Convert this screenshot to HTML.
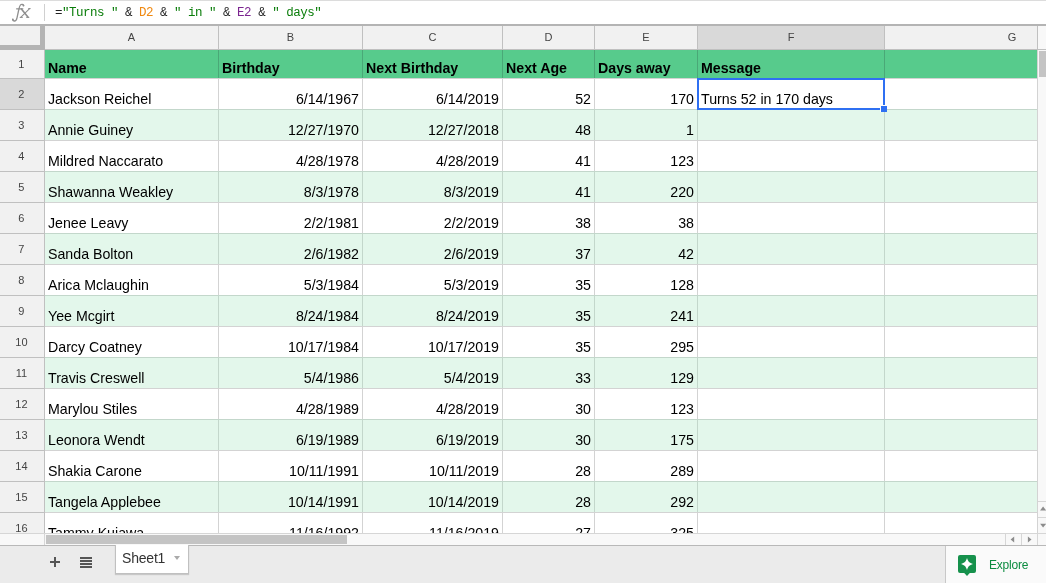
<!DOCTYPE html>
<html><head><meta charset="utf-8">
<style>
*{margin:0;padding:0;box-sizing:border-box}
html,body{width:1046px;height:583px;overflow:hidden;background:#fff;position:relative;font-family:"Liberation Sans",sans-serif}
.a{position:absolute}
.t{position:absolute;white-space:nowrap;font-size:14.2px;line-height:16px;color:#000}
.r{text-align:right}
.b{font-weight:bold}
.ch{position:absolute;top:26px;height:23px;line-height:23px;font-size:11px;color:#444;text-align:center}
.rh{position:absolute;left:-0.6px;width:44px;font-size:11px;color:#444;text-align:center}
.fm{position:absolute;left:55px;top:4px;font-family:"Liberation Mono",monospace;font-size:12.5px;letter-spacing:-0.5px;line-height:18px;white-space:pre;color:#222}
#w{position:absolute;left:0;top:0;width:1046px;height:583px;will-change:transform}
</style></head><body><div id="w">

<div class="a" style="left:0;top:0;width:1046px;height:1px;background:#dcdcdc"></div>
<div class="a" style="left:0;top:24px;width:1046px;height:2px;background:#b4b4b4"></div>
<svg class="a" style="left:0;top:0" width="40" height="25" viewBox="0 0 40 25" fill="none" stroke="#8f8f8f" stroke-width="1.3" stroke-linecap="round">
<path d="M23.7 5.6C23.3 4.3 21.6 3.8 20.5 4.9 19.6 5.8 19.2 7.6 18.7 10L17 17.8C16.5 20.2 15.5 21.1 14.2 21 13.2 20.9 12.6 20.3 12.6 19.5"/>
<path d="M16.6 8.8H22.8"/>
<path d="M21.4 8.9L28.1 17.2" stroke-width="1.6"/><path d="M29.6 8.6L20.7 17.3" stroke-width="1.1"/><path d="M20.1 17.4H22.4M26.6 17.4H28.9M28.6 8.6H30.2" stroke-width="1"/>
<circle cx="23.4" cy="5.5" r="0.9" fill="#8f8f8f" stroke="none"/>
<circle cx="12.9" cy="19.4" r="0.9" fill="#8f8f8f" stroke="none"/>
</svg>
<div class="a" style="left:44px;top:4px;width:1px;height:17px;background:#d0d0d0"></div>
<div class="fm">=<span style="color:#0a7d0a">"Turns "</span> &amp; <span style="color:#f0880f">D2</span> &amp; <span style="color:#0a7d0a">" in "</span> &amp; <span style="color:#7b2590">E2</span> &amp; <span style="color:#0a7d0a">" days"</span></div>
<div class="a" style="left:0;top:26px;width:1037px;height:23px;background:#f1f1f1"></div>
<div class="a" style="left:698px;top:26px;width:186px;height:23px;background:#d9d9d9"></div>
<div class="a" style="left:0;top:49px;width:1038px;height:1px;background:#c0c0c0"></div>
<div class="a" style="left:218px;top:26px;width:1px;height:23px;background:#c0c0c0"></div>
<div class="ch" style="left:45px;width:173px">A</div>
<div class="a" style="left:362px;top:26px;width:1px;height:23px;background:#c0c0c0"></div>
<div class="ch" style="left:219px;width:143px">B</div>
<div class="a" style="left:502px;top:26px;width:1px;height:23px;background:#c0c0c0"></div>
<div class="ch" style="left:363px;width:139px">C</div>
<div class="a" style="left:594px;top:26px;width:1px;height:23px;background:#c0c0c0"></div>
<div class="ch" style="left:503px;width:91px">D</div>
<div class="a" style="left:697px;top:26px;width:1px;height:23px;background:#c0c0c0"></div>
<div class="ch" style="left:595px;width:102px">E</div>
<div class="a" style="left:884px;top:26px;width:1px;height:23px;background:#c0c0c0"></div>
<div class="ch" style="left:698px;width:186px">F</div>
<div class="a" style="left:1037px;top:26px;width:1px;height:23px;background:#c0c0c0"></div>
<div class="ch" style="left:982px;width:60px">G</div>
<div class="a" style="left:40px;top:26px;width:5px;height:24px;background:#b4b4b4"></div>
<div class="a" style="left:0;top:45px;width:45px;height:5px;background:#b4b4b4"></div>
<div class="a" style="left:0;top:50px;width:44px;height:483px;background:#f1f1f1"></div>
<div class="a" style="left:0;top:79px;width:44px;height:30px;background:#d9d9d9"></div>
<div class="a" style="left:44px;top:50px;width:1px;height:495px;background:#c0c0c0"></div>
<div class="a" style="left:45px;top:50px;width:992px;height:28px;background:#57cb8c"></div>
<div class="a" style="left:0;top:78px;width:44px;height:1px;background:#c0c0c0"></div>
<div class="a" style="left:45px;top:78px;width:992px;height:1px;background:#d3d3d3"></div>
<div class="rh" style="top:50px;height:28px;line-height:28px;overflow:hidden">1</div>
<div class="a" style="left:218px;top:50px;width:1px;height:28px;background:#4aa877"></div>
<div class="a" style="left:362px;top:50px;width:1px;height:28px;background:#4aa877"></div>
<div class="a" style="left:502px;top:50px;width:1px;height:28px;background:#4aa877"></div>
<div class="a" style="left:594px;top:50px;width:1px;height:28px;background:#4aa877"></div>
<div class="a" style="left:697px;top:50px;width:1px;height:28px;background:#4aa877"></div>
<div class="a" style="left:884px;top:50px;width:1px;height:28px;background:#4aa877"></div>
<div class="a" style="left:1037px;top:50px;width:1px;height:28px;background:#4aa877"></div>
<div class="a" style="left:45px;top:79px;width:992px;height:30px;background:#ffffff"></div>
<div class="a" style="left:0;top:109px;width:44px;height:1px;background:#c0c0c0"></div>
<div class="a" style="left:45px;top:109px;width:992px;height:1px;background:#c3d7cb"></div>
<div class="rh" style="top:79px;height:30px;line-height:30px;overflow:hidden">2</div>
<div class="a" style="left:218px;top:79px;width:1px;height:30px;background:#d3d3d3"></div>
<div class="a" style="left:362px;top:79px;width:1px;height:30px;background:#d3d3d3"></div>
<div class="a" style="left:502px;top:79px;width:1px;height:30px;background:#d3d3d3"></div>
<div class="a" style="left:594px;top:79px;width:1px;height:30px;background:#d3d3d3"></div>
<div class="a" style="left:697px;top:79px;width:1px;height:30px;background:#d3d3d3"></div>
<div class="a" style="left:884px;top:79px;width:1px;height:30px;background:#d3d3d3"></div>
<div class="a" style="left:1037px;top:79px;width:1px;height:30px;background:#d3d3d3"></div>
<div class="a" style="left:45px;top:110px;width:992px;height:30px;background:#e3f7eb"></div>
<div class="a" style="left:0;top:140px;width:44px;height:1px;background:#c0c0c0"></div>
<div class="a" style="left:45px;top:140px;width:992px;height:1px;background:#d3d3d3"></div>
<div class="rh" style="top:110px;height:30px;line-height:30px;overflow:hidden">3</div>
<div class="a" style="left:218px;top:110px;width:1px;height:30px;background:#c3d7cb"></div>
<div class="a" style="left:362px;top:110px;width:1px;height:30px;background:#c3d7cb"></div>
<div class="a" style="left:502px;top:110px;width:1px;height:30px;background:#c3d7cb"></div>
<div class="a" style="left:594px;top:110px;width:1px;height:30px;background:#c3d7cb"></div>
<div class="a" style="left:697px;top:110px;width:1px;height:30px;background:#c3d7cb"></div>
<div class="a" style="left:884px;top:110px;width:1px;height:30px;background:#c3d7cb"></div>
<div class="a" style="left:1037px;top:110px;width:1px;height:30px;background:#c3d7cb"></div>
<div class="a" style="left:45px;top:141px;width:992px;height:30px;background:#ffffff"></div>
<div class="a" style="left:0;top:171px;width:44px;height:1px;background:#c0c0c0"></div>
<div class="a" style="left:45px;top:171px;width:992px;height:1px;background:#c3d7cb"></div>
<div class="rh" style="top:141px;height:30px;line-height:30px;overflow:hidden">4</div>
<div class="a" style="left:218px;top:141px;width:1px;height:30px;background:#d3d3d3"></div>
<div class="a" style="left:362px;top:141px;width:1px;height:30px;background:#d3d3d3"></div>
<div class="a" style="left:502px;top:141px;width:1px;height:30px;background:#d3d3d3"></div>
<div class="a" style="left:594px;top:141px;width:1px;height:30px;background:#d3d3d3"></div>
<div class="a" style="left:697px;top:141px;width:1px;height:30px;background:#d3d3d3"></div>
<div class="a" style="left:884px;top:141px;width:1px;height:30px;background:#d3d3d3"></div>
<div class="a" style="left:1037px;top:141px;width:1px;height:30px;background:#d3d3d3"></div>
<div class="a" style="left:45px;top:172px;width:992px;height:30px;background:#e3f7eb"></div>
<div class="a" style="left:0;top:202px;width:44px;height:1px;background:#c0c0c0"></div>
<div class="a" style="left:45px;top:202px;width:992px;height:1px;background:#d3d3d3"></div>
<div class="rh" style="top:172px;height:30px;line-height:30px;overflow:hidden">5</div>
<div class="a" style="left:218px;top:172px;width:1px;height:30px;background:#c3d7cb"></div>
<div class="a" style="left:362px;top:172px;width:1px;height:30px;background:#c3d7cb"></div>
<div class="a" style="left:502px;top:172px;width:1px;height:30px;background:#c3d7cb"></div>
<div class="a" style="left:594px;top:172px;width:1px;height:30px;background:#c3d7cb"></div>
<div class="a" style="left:697px;top:172px;width:1px;height:30px;background:#c3d7cb"></div>
<div class="a" style="left:884px;top:172px;width:1px;height:30px;background:#c3d7cb"></div>
<div class="a" style="left:1037px;top:172px;width:1px;height:30px;background:#c3d7cb"></div>
<div class="a" style="left:45px;top:203px;width:992px;height:30px;background:#ffffff"></div>
<div class="a" style="left:0;top:233px;width:44px;height:1px;background:#c0c0c0"></div>
<div class="a" style="left:45px;top:233px;width:992px;height:1px;background:#c3d7cb"></div>
<div class="rh" style="top:203px;height:30px;line-height:30px;overflow:hidden">6</div>
<div class="a" style="left:218px;top:203px;width:1px;height:30px;background:#d3d3d3"></div>
<div class="a" style="left:362px;top:203px;width:1px;height:30px;background:#d3d3d3"></div>
<div class="a" style="left:502px;top:203px;width:1px;height:30px;background:#d3d3d3"></div>
<div class="a" style="left:594px;top:203px;width:1px;height:30px;background:#d3d3d3"></div>
<div class="a" style="left:697px;top:203px;width:1px;height:30px;background:#d3d3d3"></div>
<div class="a" style="left:884px;top:203px;width:1px;height:30px;background:#d3d3d3"></div>
<div class="a" style="left:1037px;top:203px;width:1px;height:30px;background:#d3d3d3"></div>
<div class="a" style="left:45px;top:234px;width:992px;height:30px;background:#e3f7eb"></div>
<div class="a" style="left:0;top:264px;width:44px;height:1px;background:#c0c0c0"></div>
<div class="a" style="left:45px;top:264px;width:992px;height:1px;background:#d3d3d3"></div>
<div class="rh" style="top:234px;height:30px;line-height:30px;overflow:hidden">7</div>
<div class="a" style="left:218px;top:234px;width:1px;height:30px;background:#c3d7cb"></div>
<div class="a" style="left:362px;top:234px;width:1px;height:30px;background:#c3d7cb"></div>
<div class="a" style="left:502px;top:234px;width:1px;height:30px;background:#c3d7cb"></div>
<div class="a" style="left:594px;top:234px;width:1px;height:30px;background:#c3d7cb"></div>
<div class="a" style="left:697px;top:234px;width:1px;height:30px;background:#c3d7cb"></div>
<div class="a" style="left:884px;top:234px;width:1px;height:30px;background:#c3d7cb"></div>
<div class="a" style="left:1037px;top:234px;width:1px;height:30px;background:#c3d7cb"></div>
<div class="a" style="left:45px;top:265px;width:992px;height:30px;background:#ffffff"></div>
<div class="a" style="left:0;top:295px;width:44px;height:1px;background:#c0c0c0"></div>
<div class="a" style="left:45px;top:295px;width:992px;height:1px;background:#c3d7cb"></div>
<div class="rh" style="top:265px;height:30px;line-height:30px;overflow:hidden">8</div>
<div class="a" style="left:218px;top:265px;width:1px;height:30px;background:#d3d3d3"></div>
<div class="a" style="left:362px;top:265px;width:1px;height:30px;background:#d3d3d3"></div>
<div class="a" style="left:502px;top:265px;width:1px;height:30px;background:#d3d3d3"></div>
<div class="a" style="left:594px;top:265px;width:1px;height:30px;background:#d3d3d3"></div>
<div class="a" style="left:697px;top:265px;width:1px;height:30px;background:#d3d3d3"></div>
<div class="a" style="left:884px;top:265px;width:1px;height:30px;background:#d3d3d3"></div>
<div class="a" style="left:1037px;top:265px;width:1px;height:30px;background:#d3d3d3"></div>
<div class="a" style="left:45px;top:296px;width:992px;height:30px;background:#e3f7eb"></div>
<div class="a" style="left:0;top:326px;width:44px;height:1px;background:#c0c0c0"></div>
<div class="a" style="left:45px;top:326px;width:992px;height:1px;background:#d3d3d3"></div>
<div class="rh" style="top:296px;height:30px;line-height:30px;overflow:hidden">9</div>
<div class="a" style="left:218px;top:296px;width:1px;height:30px;background:#c3d7cb"></div>
<div class="a" style="left:362px;top:296px;width:1px;height:30px;background:#c3d7cb"></div>
<div class="a" style="left:502px;top:296px;width:1px;height:30px;background:#c3d7cb"></div>
<div class="a" style="left:594px;top:296px;width:1px;height:30px;background:#c3d7cb"></div>
<div class="a" style="left:697px;top:296px;width:1px;height:30px;background:#c3d7cb"></div>
<div class="a" style="left:884px;top:296px;width:1px;height:30px;background:#c3d7cb"></div>
<div class="a" style="left:1037px;top:296px;width:1px;height:30px;background:#c3d7cb"></div>
<div class="a" style="left:45px;top:327px;width:992px;height:30px;background:#ffffff"></div>
<div class="a" style="left:0;top:357px;width:44px;height:1px;background:#c0c0c0"></div>
<div class="a" style="left:45px;top:357px;width:992px;height:1px;background:#c3d7cb"></div>
<div class="rh" style="top:327px;height:30px;line-height:30px;overflow:hidden">10</div>
<div class="a" style="left:218px;top:327px;width:1px;height:30px;background:#d3d3d3"></div>
<div class="a" style="left:362px;top:327px;width:1px;height:30px;background:#d3d3d3"></div>
<div class="a" style="left:502px;top:327px;width:1px;height:30px;background:#d3d3d3"></div>
<div class="a" style="left:594px;top:327px;width:1px;height:30px;background:#d3d3d3"></div>
<div class="a" style="left:697px;top:327px;width:1px;height:30px;background:#d3d3d3"></div>
<div class="a" style="left:884px;top:327px;width:1px;height:30px;background:#d3d3d3"></div>
<div class="a" style="left:1037px;top:327px;width:1px;height:30px;background:#d3d3d3"></div>
<div class="a" style="left:45px;top:358px;width:992px;height:30px;background:#e3f7eb"></div>
<div class="a" style="left:0;top:388px;width:44px;height:1px;background:#c0c0c0"></div>
<div class="a" style="left:45px;top:388px;width:992px;height:1px;background:#d3d3d3"></div>
<div class="rh" style="top:358px;height:30px;line-height:30px;overflow:hidden">11</div>
<div class="a" style="left:218px;top:358px;width:1px;height:30px;background:#c3d7cb"></div>
<div class="a" style="left:362px;top:358px;width:1px;height:30px;background:#c3d7cb"></div>
<div class="a" style="left:502px;top:358px;width:1px;height:30px;background:#c3d7cb"></div>
<div class="a" style="left:594px;top:358px;width:1px;height:30px;background:#c3d7cb"></div>
<div class="a" style="left:697px;top:358px;width:1px;height:30px;background:#c3d7cb"></div>
<div class="a" style="left:884px;top:358px;width:1px;height:30px;background:#c3d7cb"></div>
<div class="a" style="left:1037px;top:358px;width:1px;height:30px;background:#c3d7cb"></div>
<div class="a" style="left:45px;top:389px;width:992px;height:30px;background:#ffffff"></div>
<div class="a" style="left:0;top:419px;width:44px;height:1px;background:#c0c0c0"></div>
<div class="a" style="left:45px;top:419px;width:992px;height:1px;background:#c3d7cb"></div>
<div class="rh" style="top:389px;height:30px;line-height:30px;overflow:hidden">12</div>
<div class="a" style="left:218px;top:389px;width:1px;height:30px;background:#d3d3d3"></div>
<div class="a" style="left:362px;top:389px;width:1px;height:30px;background:#d3d3d3"></div>
<div class="a" style="left:502px;top:389px;width:1px;height:30px;background:#d3d3d3"></div>
<div class="a" style="left:594px;top:389px;width:1px;height:30px;background:#d3d3d3"></div>
<div class="a" style="left:697px;top:389px;width:1px;height:30px;background:#d3d3d3"></div>
<div class="a" style="left:884px;top:389px;width:1px;height:30px;background:#d3d3d3"></div>
<div class="a" style="left:1037px;top:389px;width:1px;height:30px;background:#d3d3d3"></div>
<div class="a" style="left:45px;top:420px;width:992px;height:30px;background:#e3f7eb"></div>
<div class="a" style="left:0;top:450px;width:44px;height:1px;background:#c0c0c0"></div>
<div class="a" style="left:45px;top:450px;width:992px;height:1px;background:#d3d3d3"></div>
<div class="rh" style="top:420px;height:30px;line-height:30px;overflow:hidden">13</div>
<div class="a" style="left:218px;top:420px;width:1px;height:30px;background:#c3d7cb"></div>
<div class="a" style="left:362px;top:420px;width:1px;height:30px;background:#c3d7cb"></div>
<div class="a" style="left:502px;top:420px;width:1px;height:30px;background:#c3d7cb"></div>
<div class="a" style="left:594px;top:420px;width:1px;height:30px;background:#c3d7cb"></div>
<div class="a" style="left:697px;top:420px;width:1px;height:30px;background:#c3d7cb"></div>
<div class="a" style="left:884px;top:420px;width:1px;height:30px;background:#c3d7cb"></div>
<div class="a" style="left:1037px;top:420px;width:1px;height:30px;background:#c3d7cb"></div>
<div class="a" style="left:45px;top:451px;width:992px;height:30px;background:#ffffff"></div>
<div class="a" style="left:0;top:481px;width:44px;height:1px;background:#c0c0c0"></div>
<div class="a" style="left:45px;top:481px;width:992px;height:1px;background:#c3d7cb"></div>
<div class="rh" style="top:451px;height:30px;line-height:30px;overflow:hidden">14</div>
<div class="a" style="left:218px;top:451px;width:1px;height:30px;background:#d3d3d3"></div>
<div class="a" style="left:362px;top:451px;width:1px;height:30px;background:#d3d3d3"></div>
<div class="a" style="left:502px;top:451px;width:1px;height:30px;background:#d3d3d3"></div>
<div class="a" style="left:594px;top:451px;width:1px;height:30px;background:#d3d3d3"></div>
<div class="a" style="left:697px;top:451px;width:1px;height:30px;background:#d3d3d3"></div>
<div class="a" style="left:884px;top:451px;width:1px;height:30px;background:#d3d3d3"></div>
<div class="a" style="left:1037px;top:451px;width:1px;height:30px;background:#d3d3d3"></div>
<div class="a" style="left:45px;top:482px;width:992px;height:30px;background:#e3f7eb"></div>
<div class="a" style="left:0;top:512px;width:44px;height:1px;background:#c0c0c0"></div>
<div class="a" style="left:45px;top:512px;width:992px;height:1px;background:#d3d3d3"></div>
<div class="rh" style="top:482px;height:30px;line-height:30px;overflow:hidden">15</div>
<div class="a" style="left:218px;top:482px;width:1px;height:30px;background:#c3d7cb"></div>
<div class="a" style="left:362px;top:482px;width:1px;height:30px;background:#c3d7cb"></div>
<div class="a" style="left:502px;top:482px;width:1px;height:30px;background:#c3d7cb"></div>
<div class="a" style="left:594px;top:482px;width:1px;height:30px;background:#c3d7cb"></div>
<div class="a" style="left:697px;top:482px;width:1px;height:30px;background:#c3d7cb"></div>
<div class="a" style="left:884px;top:482px;width:1px;height:30px;background:#c3d7cb"></div>
<div class="a" style="left:1037px;top:482px;width:1px;height:30px;background:#c3d7cb"></div>
<div class="a" style="left:45px;top:513px;width:992px;height:20px;background:#ffffff"></div>
<div class="rh" style="top:513px;height:20px;line-height:30px;overflow:hidden">16</div>
<div class="a" style="left:218px;top:513px;width:1px;height:20px;background:#d3d3d3"></div>
<div class="a" style="left:362px;top:513px;width:1px;height:20px;background:#d3d3d3"></div>
<div class="a" style="left:502px;top:513px;width:1px;height:20px;background:#d3d3d3"></div>
<div class="a" style="left:594px;top:513px;width:1px;height:20px;background:#d3d3d3"></div>
<div class="a" style="left:697px;top:513px;width:1px;height:20px;background:#d3d3d3"></div>
<div class="a" style="left:884px;top:513px;width:1px;height:20px;background:#d3d3d3"></div>
<div class="a" style="left:1037px;top:513px;width:1px;height:20px;background:#d3d3d3"></div>
<div class="a" style="left:1037px;top:50px;width:1px;height:483px;background:#d3d3d3"></div>
<div class="a" style="left:45px;top:50px;width:992px;height:483px;overflow:hidden">
<div class="t b" style="left:3px;top:10px">Name</div>
<div class="t b" style="left:177px;top:10px">Birthday</div>
<div class="t b" style="left:321px;top:10px">Next Birthday</div>
<div class="t b" style="left:461px;top:10px">Next Age</div>
<div class="t b" style="left:553px;top:10px">Days away</div>
<div class="t b" style="left:656px;top:10px">Message</div>
<div class="t" style="left:3px;top:41px">Jackson Reichel</div>
<div class="t r" style="left:174px;width:140px;top:41px">6/14/1967</div>
<div class="t r" style="left:318px;width:136px;top:41px">6/14/2019</div>
<div class="t r" style="left:458px;width:88px;top:41px">52</div>
<div class="t r" style="left:550px;width:99px;top:41px">170</div>
<div class="t" style="left:656px;top:41px">Turns 52 in 170 days</div>
<div class="t" style="left:3px;top:72px">Annie Guiney</div>
<div class="t r" style="left:174px;width:140px;top:72px">12/27/1970</div>
<div class="t r" style="left:318px;width:136px;top:72px">12/27/2018</div>
<div class="t r" style="left:458px;width:88px;top:72px">48</div>
<div class="t r" style="left:550px;width:99px;top:72px">1</div>
<div class="t" style="left:3px;top:103px">Mildred Naccarato</div>
<div class="t r" style="left:174px;width:140px;top:103px">4/28/1978</div>
<div class="t r" style="left:318px;width:136px;top:103px">4/28/2019</div>
<div class="t r" style="left:458px;width:88px;top:103px">41</div>
<div class="t r" style="left:550px;width:99px;top:103px">123</div>
<div class="t" style="left:3px;top:134px">Shawanna Weakley</div>
<div class="t r" style="left:174px;width:140px;top:134px">8/3/1978</div>
<div class="t r" style="left:318px;width:136px;top:134px">8/3/2019</div>
<div class="t r" style="left:458px;width:88px;top:134px">41</div>
<div class="t r" style="left:550px;width:99px;top:134px">220</div>
<div class="t" style="left:3px;top:165px">Jenee Leavy</div>
<div class="t r" style="left:174px;width:140px;top:165px">2/2/1981</div>
<div class="t r" style="left:318px;width:136px;top:165px">2/2/2019</div>
<div class="t r" style="left:458px;width:88px;top:165px">38</div>
<div class="t r" style="left:550px;width:99px;top:165px">38</div>
<div class="t" style="left:3px;top:196px">Sanda Bolton</div>
<div class="t r" style="left:174px;width:140px;top:196px">2/6/1982</div>
<div class="t r" style="left:318px;width:136px;top:196px">2/6/2019</div>
<div class="t r" style="left:458px;width:88px;top:196px">37</div>
<div class="t r" style="left:550px;width:99px;top:196px">42</div>
<div class="t" style="left:3px;top:227px">Arica Mclaughin</div>
<div class="t r" style="left:174px;width:140px;top:227px">5/3/1984</div>
<div class="t r" style="left:318px;width:136px;top:227px">5/3/2019</div>
<div class="t r" style="left:458px;width:88px;top:227px">35</div>
<div class="t r" style="left:550px;width:99px;top:227px">128</div>
<div class="t" style="left:3px;top:258px">Yee Mcgirt</div>
<div class="t r" style="left:174px;width:140px;top:258px">8/24/1984</div>
<div class="t r" style="left:318px;width:136px;top:258px">8/24/2019</div>
<div class="t r" style="left:458px;width:88px;top:258px">35</div>
<div class="t r" style="left:550px;width:99px;top:258px">241</div>
<div class="t" style="left:3px;top:289px">Darcy Coatney</div>
<div class="t r" style="left:174px;width:140px;top:289px">10/17/1984</div>
<div class="t r" style="left:318px;width:136px;top:289px">10/17/2019</div>
<div class="t r" style="left:458px;width:88px;top:289px">35</div>
<div class="t r" style="left:550px;width:99px;top:289px">295</div>
<div class="t" style="left:3px;top:320px">Travis Creswell</div>
<div class="t r" style="left:174px;width:140px;top:320px">5/4/1986</div>
<div class="t r" style="left:318px;width:136px;top:320px">5/4/2019</div>
<div class="t r" style="left:458px;width:88px;top:320px">33</div>
<div class="t r" style="left:550px;width:99px;top:320px">129</div>
<div class="t" style="left:3px;top:351px">Marylou Stiles</div>
<div class="t r" style="left:174px;width:140px;top:351px">4/28/1989</div>
<div class="t r" style="left:318px;width:136px;top:351px">4/28/2019</div>
<div class="t r" style="left:458px;width:88px;top:351px">30</div>
<div class="t r" style="left:550px;width:99px;top:351px">123</div>
<div class="t" style="left:3px;top:382px">Leonora Wendt</div>
<div class="t r" style="left:174px;width:140px;top:382px">6/19/1989</div>
<div class="t r" style="left:318px;width:136px;top:382px">6/19/2019</div>
<div class="t r" style="left:458px;width:88px;top:382px">30</div>
<div class="t r" style="left:550px;width:99px;top:382px">175</div>
<div class="t" style="left:3px;top:413px">Shakia Carone</div>
<div class="t r" style="left:174px;width:140px;top:413px">10/11/1991</div>
<div class="t r" style="left:318px;width:136px;top:413px">10/11/2019</div>
<div class="t r" style="left:458px;width:88px;top:413px">28</div>
<div class="t r" style="left:550px;width:99px;top:413px">289</div>
<div class="t" style="left:3px;top:444px">Tangela Applebee</div>
<div class="t r" style="left:174px;width:140px;top:444px">10/14/1991</div>
<div class="t r" style="left:318px;width:136px;top:444px">10/14/2019</div>
<div class="t r" style="left:458px;width:88px;top:444px">28</div>
<div class="t r" style="left:550px;width:99px;top:444px">292</div>
<div class="t" style="left:3px;top:475px">Tammy Kujawa</div>
<div class="t r" style="left:174px;width:140px;top:475px">11/16/1992</div>
<div class="t r" style="left:318px;width:136px;top:475px">11/16/2019</div>
<div class="t r" style="left:458px;width:88px;top:475px">27</div>
<div class="t r" style="left:550px;width:99px;top:475px">325</div>
</div>
<div class="a" style="left:697px;top:78px;width:188px;height:32px;border:2px solid #2f70f2"></div>
<div class="a" style="left:880px;top:105px;width:7px;height:7px;background:#fff"></div>
<div class="a" style="left:881px;top:106px;width:6px;height:6px;background:#2f70f2"></div>
<div class="a" style="left:1038px;top:26px;width:8px;height:507px;background:#f8f8f8"></div>
<div class="a" style="left:1038px;top:49px;width:8px;height:1px;background:#c0c0c0"></div>
<div class="a" style="left:1039px;top:51px;width:7px;height:26px;background:#c4c4c4"></div>
<div class="a" style="left:1038px;top:501px;width:8px;height:1px;background:#d6d6d6"></div>
<div class="a" style="left:1038px;top:517px;width:8px;height:1px;background:#d6d6d6"></div>
<div class="a" style="left:0;top:533px;width:1046px;height:1px;background:#d6d6d6"></div>
<div class="a" style="left:0;top:534px;width:1046px;height:11px;background:#f8f8f8"></div>
<div class="a" style="left:44px;top:534px;width:1px;height:11px;background:#d6d6d6"></div>
<div class="a" style="left:46px;top:535px;width:301px;height:9px;background:#c4c4c4"></div>
<div class="a" style="left:1005px;top:534px;width:1px;height:11px;background:#d6d6d6"></div>
<div class="a" style="left:1021px;top:534px;width:1px;height:11px;background:#d6d6d6"></div>
<div class="a" style="left:1037px;top:534px;width:1px;height:11px;background:#d6d6d6"></div>
<div class="a" style="left:0;top:545px;width:1046px;height:1px;background:#b8b8b8"></div>
<svg class="a" style="left:1000px;top:495px" width="46" height="55" viewBox="0 0 46 55"><g fill="#8c8c8c">
<path d="M43.1 11.6L46.1 15.4H40.1z"/><path d="M40.1 28.8H46.1L43.1 32.6z"/>
<path d="M10.6 44.5L14.2 41.6V47.4z"/><path d="M27.9 41.6L31.5 44.5 27.9 47.4z"/></g></svg>
<div class="a" style="left:0;top:546px;width:1046px;height:37px;background:#ebebeb"></div>
<div class="a" style="left:50px;top:561px;width:10px;height:2px;background:#555"></div>
<div class="a" style="left:54px;top:557px;width:2px;height:10px;background:#555"></div>
<div class="a" style="left:80px;top:557px;width:12px;height:2px;background:#555"></div>
<div class="a" style="left:80px;top:560px;width:12px;height:2px;background:#555"></div>
<div class="a" style="left:80px;top:563px;width:12px;height:2px;background:#555"></div>
<div class="a" style="left:80px;top:566px;width:12px;height:2px;background:#555"></div>
<div class="a" style="left:115px;top:545px;width:74px;height:29px;background:#fff;border:1px solid #c0c0c0;border-top:none;box-shadow:0 1px 1px rgba(0,0,0,.15)"></div>
<div class="a" style="left:122px;top:550.4px;font-size:14px;letter-spacing:-0.2px;line-height:16px;color:#333">Sheet1</div>
<div class="a" style="left:173.8px;top:556.2px;width:0;height:0;border-left:3.8px solid transparent;border-right:3.8px solid transparent;border-top:4px solid #aaa"></div>
<div class="a" style="left:945px;top:546px;width:101px;height:37px;background:#fafafa;border-left:1px solid #c8c8c8"></div>
<svg class="a" style="left:958px;top:555px" width="18" height="21" viewBox="0 0 18 21">
<path d="M2 0h14a2 2 0 0 1 2 2v14a2 2 0 0 1-2 2h-4.2L9 21 6.2 18H2a2 2 0 0 1-2-2V2a2 2 0 0 1 2-2z" fill="#16914c"/>
<path d="M9 3C10.1 6.6 11.4 7.9 15 9 11.4 10.1 10.1 11.4 9 15 7.9 11.4 6.6 10.1 3 9 6.6 7.9 7.9 6.6 9 3z" fill="#fff"/>
</svg>
<div class="a" style="left:989px;top:557.5px;font-size:12px;letter-spacing:-0.2px;line-height:14px;color:#0c8c40">Explore</div>
</div></body></html>
